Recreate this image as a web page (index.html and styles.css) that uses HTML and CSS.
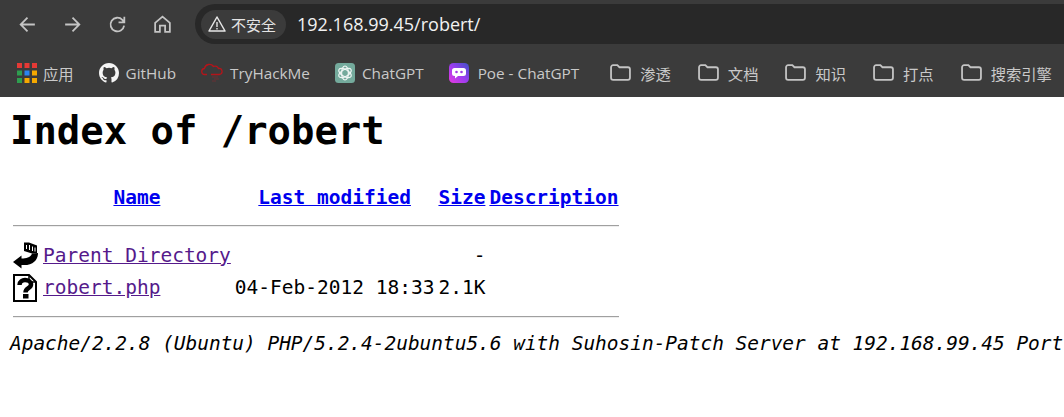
FILE: index.html
```html
<!DOCTYPE html>
<html lang="zh-CN">
<head>
<meta charset="utf-8">
<title>Index of /robert</title>
<link rel="stylesheet" href="styles.css">
</head>
<body>
<header class="chrome">
  <div class="toolbar">
    <nav class="nav">
      <svg class="nav-icon" viewBox="0 0 20 20"><path d="M17 10H4M10 3.500L3.500 10l6.500 6.500"/></svg>
      <svg class="nav-icon" viewBox="0 0 20 20"><path d="M3 10h13M10 3.500l6.500 6.500-6.500 6.500"/></svg>
      <svg class="nav-icon" viewBox="0 0 20 20"><path d="M16.300 11a6.500 6.500 0 1 1-1.700-5.400L16.500 8M16.500 2.500V8H11"/></svg>
      <svg class="nav-icon" viewBox="0 0 20 20"><path d="M3 17V8.500L10 2.500l7 6V17h-4.500v-6h-5v6z"/></svg>
    </nav>
    <div class="omnibox">
      <div class="chip">
        <svg class="warn" viewBox="0 0 20 20"><path class="warn-outline" d="M10 3 18 17H2z"/><path class="warn-mark" d="M10 8v5M10 14v1.600"/></svg>
        <span>不安全</span>
      </div>
      <span class="url">192.168.99.45/robert/</span>
    </div>
  </div>
  <div class="bookmarks">
    <span class="bm bm-apps">
      <svg class="bm-icon" viewBox="0 0 16 16">
        <rect x="0" y="0" width="4" height="4" fill="#e53935"/><rect x="6" y="0" width="4" height="4" fill="#e53935"/><rect x="12" y="0" width="4" height="4" fill="#e53935"/>
        <rect x="0" y="6" width="4" height="4" fill="#2e9e4f"/><rect x="6" y="6" width="4" height="4" fill="#2a85f0"/><rect x="12" y="6" width="4" height="4" fill="#f5a800"/>
        <rect x="0" y="12" width="4" height="4" fill="#2e9e4f"/><rect x="6" y="12" width="4" height="4" fill="#f5a800"/><rect x="12" y="12" width="4" height="4" fill="#f5a800"/>
      </svg>
      <span>应用</span>
    </span>
    <span class="bm">
      <svg class="bm-icon" viewBox="0 0 16 16"><path fill="#f4f4f4" d="M8 0C3.580 0 0 3.580 0 8c0 3.540 2.290 6.530 5.470 7.590.4.070.55-.17.55-.38 0-.19-.01-.82-.01-1.490-2.010.37-2.530-.49-2.690-.94-.09-.23-.48-.94-.82-1.130-.28-.15-.68-.52-.01-.53.63-.01 1.080.58 1.230.82.720 1.210 1.870.870 2.330.660.070-.520.280-.870.510-1.070-1.780-.2-3.640-.890-3.640-3.950 0-.870.310-1.590.820-2.150-.080-.2-.360-1.020.080-2.120 0 0 .670-.210 2.200.820a7.600 7.600 0 0 1 4 0c1.530-1.040 2.200-.820 2.200-.820.440 1.100.160 1.920.080 2.120.510.560.820 1.270.820 2.150 0 3.070-1.870 3.750-3.650 3.950.290.250.540.730.540 1.480 0 1.070-.010 1.930-.010 2.200 0 .210.150.460.550.380A8.010 8.010 0 0 0 16 8c0-4.420-3.580-8-8-8z"/></svg>
      <span>GitHub</span>
    </span>
    <span class="bm">
      <svg class="bm-icon bm-thm" viewBox="0 0 22 20">
        <path fill="none" stroke="#b5141a" stroke-width="1.300" d="M6 11.500H4a3 3 0 0 1-.5-6A5 5 0 0 1 12.500 3.500a3.500 3.500 0 0 1 5 2 3 3 0 0 1 1 6H10"/>
        <path stroke="#6a3035" stroke-width="1" d="M11 14h6M13 16h5M11 18h4"/>
      </svg>
      <span>TryHackMe</span>
    </span>
    <span class="bm">
      <svg class="bm-icon" viewBox="0 0 20 20">
        <rect width="20" height="20" rx="3.500" fill="#74aa9c"/>
        <g fill="none" stroke="#eef5f3" stroke-width="1.200">
          <ellipse cx="10" cy="10" rx="3.400" ry="7"/>
          <ellipse cx="10" cy="10" rx="3.400" ry="7" transform="rotate(60 10 10)"/>
          <ellipse cx="10" cy="10" rx="3.400" ry="7" transform="rotate(120 10 10)"/>
        </g>
      </svg>
      <span>ChatGPT</span>
    </span>
    <span class="bm bm-poe">
      <svg class="bm-icon" viewBox="0 0 20 20">
        <defs><linearGradient id="poe" x1="1" y1="0" x2="0" y2="1"><stop offset="0" stop-color="#3f51c8"/><stop offset=".5" stop-color="#9a3df0"/><stop offset="1" stop-color="#e83ae0"/></linearGradient></defs>
        <rect width="20" height="20" rx="4.500" fill="url(#poe)"/>
        <path fill="#fff" d="M5.500 5h9A2.500 2.500 0 0 1 17 7.500v3a2.500 2.500 0 0 1-2.500 2.500H9l-3 2.500V13h-.5A2.500 2.500 0 0 1 3 10.500v-3A2.500 2.500 0 0 1 5.500 5z"/>
        <circle cx="7.500" cy="9" r="1.300" fill="#a23ce6"/><circle cx="12.500" cy="9" r="1.300" fill="#a23ce6"/>
      </svg>
      <span>Poe - ChatGPT</span>
    </span>
    <span class="bm bm-folder"><svg class="folder" viewBox="0 0 20 16"><path d="M1 3a2 2 0 0 1 2-2h4l2 2h8a2 2 0 0 1 2 2v8a2 2 0 0 1-2 2H3a2 2 0 0 1-2-2z"/></svg><span>渗透</span></span>
    <span class="bm bm-folder"><svg class="folder" viewBox="0 0 20 16"><path d="M1 3a2 2 0 0 1 2-2h4l2 2h8a2 2 0 0 1 2 2v8a2 2 0 0 1-2 2H3a2 2 0 0 1-2-2z"/></svg><span>文档</span></span>
    <span class="bm bm-folder"><svg class="folder" viewBox="0 0 20 16"><path d="M1 3a2 2 0 0 1 2-2h4l2 2h8a2 2 0 0 1 2 2v8a2 2 0 0 1-2 2H3a2 2 0 0 1-2-2z"/></svg><span>知识</span></span>
    <span class="bm bm-folder"><svg class="folder" viewBox="0 0 20 16"><path d="M1 3a2 2 0 0 1 2-2h4l2 2h8a2 2 0 0 1 2 2v8a2 2 0 0 1-2 2H3a2 2 0 0 1-2-2z"/></svg><span>打点</span></span>
    <span class="bm bm-folder"><svg class="folder" viewBox="0 0 20 16"><path d="M1 3a2 2 0 0 1 2-2h4l2 2h8a2 2 0 0 1 2 2v8a2 2 0 0 1-2 2H3a2 2 0 0 1-2-2z"/></svg><span>搜索引擎</span></span>
  </div>
</header>
<main class="listing">
  <h1>Index of /robert</h1>
  <table>
    <tr>
      <th class="c-icon"></th>
      <th><a href="#">Name</a></th>
      <th><a href="#">Last modified</a></th>
      <th><a href="#">Size</a></th>
      <th><a href="#">Description</a></th>
    </tr>
    <tr><th colspan="5"><hr class="rule-top"></th></tr>
    <tr>
      <td class="c-icon">
        <svg class="file-icon" viewBox="0 0 25 28">
          <path d="M0 20 8.500 13.500V16.500c5 0 9-1 10.500-5l6-.5C25 18 20 24 8.500 23V26.500z"/>
          <path d="M11 .5h5l8 3v7.500l-5 .5L11 9z"/>
          <path class="hatch" d="M13.500 3v4M16.500 3v5M19.500 4.500v4.500M22 5.500v4"/>
        </svg>
      </td>
      <td><a class="visited" href="#">Parent Directory</a></td>
      <td></td>
      <td class="size">-</td>
      <td></td>
    </tr>
    <tr>
      <td class="c-icon">
        <svg class="file-icon" viewBox="0 0 25 28">
          <path class="doc" d="M1 1h15l7 7v19H1z"/>
          <path class="fold" d="M16 1v7h7"/>
          <path class="qmark" d="M6.500 11C6.500 7.500 9.500 6 12 6c3 0 6 1.500 6 4.500 0 4-5.500 3.500-5.500 8"/>
          <rect x="10" y="20" width="5.500" height="4.500"/>
        </svg>
      </td>
      <td><a class="visited" href="#">robert.php</a></td>
      <td>04-Feb-2012 18:33</td>
      <td class="size">2.1K</td>
      <td></td>
    </tr>
    <tr><th colspan="5"><hr class="rule-bottom"></th></tr>
  </table>
  <address>Apache/2.2.8 (Ubuntu) PHP/5.2.4-2ubuntu5.6 with Suhosin-Patch Server at 192.168.99.45 Port</address>
</main>
</body>
</html>
```
FILE: styles.css
```css
html, body {
  margin: 0;
  padding: 0;
  height: 100%;
  overflow: hidden;
  background: #fff;
}

.chrome {
  height: 97px;
  background: #3b3b3b;
  font-family: "Open Sans", "Noto Sans CJK SC", sans-serif;
  color: #c9c9c9;
}

.toolbar {
  display: flex;
  align-items: center;
  height: 48px;
  padding-top: 1px;
  box-sizing: border-box;
}

.nav {
  display: flex;
  gap: 24px;
  width: 195px;
  padding-left: 17px;
  box-sizing: border-box;
}

.nav-icon {
  width: 21px;
  height: 21px;
  flex: none;
  fill: none;
  stroke: #c4c4c4;
  stroke-width: 1.700;
}

.omnibox {
  flex: 1;
  display: flex;
  align-items: center;
  height: 40px;
  margin-bottom: 1px;
  padding-left: 6px;
  background: #282828;
  border-radius: 20px 0 0 20px;
}

.chip {
  display: flex;
  align-items: center;
  gap: 4px;
  width: 85px;
  height: 29px;
  padding-left: 6px;
  box-sizing: border-box;
  background: #3b3b3b;
  border-radius: 15px;
  font-size: 15px;
  color: #e4e4e4;
}

.warn {
  width: 20px;
  height: 20px;
  flex: none;
}

.warn-outline {
  fill: none;
  stroke: #e6e6e6;
  stroke-width: 1.500;
  stroke-linejoin: round;
}

.warn-mark {
  fill: none;
  stroke: #e6e6e6;
  stroke-width: 1.400;
}

.url {
  margin-left: 11px;
  font-size: 18px;
  color: #f2f2f2;
  white-space: nowrap;
}

.bookmarks {
  display: flex;
  align-items: center;
  gap: 25px;
  height: 49px;
  padding-left: 17px;
  font-size: 15.300px;
  white-space: nowrap;
}

.bm {
  display: flex;
  align-items: center;
  gap: 7px;
}

.bm-apps {
  gap: 6px;
}

.bm-icon {
  width: 20px;
  height: 20px;
  flex: none;
}

.bm-thm {
  width: 22px;
  height: 20px;
}

.bm-poe {
  gap: 9px;
  margin-right: 6px;
}

.bm-folder {
  gap: 9px;
  margin-right: 2px;
}

.folder {
  width: 21px;
  height: 17px;
  flex: none;
  fill: none;
  stroke: #c4c4c4;
  stroke-width: 1.700;
}

.listing {
  padding: 0 0 0 10px;
  font-family: "DejaVu Sans Mono", monospace;
  font-size: 19.500px;
  color: #000;
}

h1 {
  margin: 10px 0 28px;
  font-size: 38.900px;
  line-height: 48px;
  font-weight: 700;
}

table {
  border-spacing: 2px;
}

th, td {
  padding: 1px;
  line-height: 24px;
  white-space: nowrap;
}

th {
  font-weight: 700;
}

a {
  color: #0000ee;
}

a.visited {
  color: #551a8b;
}

.c-icon {
  width: 26px;
  vertical-align: top;
}

.file-icon {
  display: block;
  width: 25px;
  height: 28px;
  fill: #000;
}

.hatch {
  fill: none;
  stroke: #fff;
  stroke-width: 1;
}

.doc {
  fill: #fff;
  stroke: #000;
  stroke-width: 2;
}

.fold {
  fill: none;
  stroke: #000;
  stroke-width: 1.500;
}

.qmark {
  fill: none;
  stroke: #000;
  stroke-width: 4.500;
}

.size {
  text-align: right;
}

hr {
  border: 0;
  border-top: 1px solid #a0a0a0;
  border-bottom: 1px solid #eee;
}

.rule-top {
  margin: 11px 0 11px;
}

.rule-bottom {
  margin: 10px 0 4px;
}

address {
  margin-top: 7px;
  font-size: 19.460px;
  font-style: italic;
  line-height: 24px;
  white-space: nowrap;
}
```
